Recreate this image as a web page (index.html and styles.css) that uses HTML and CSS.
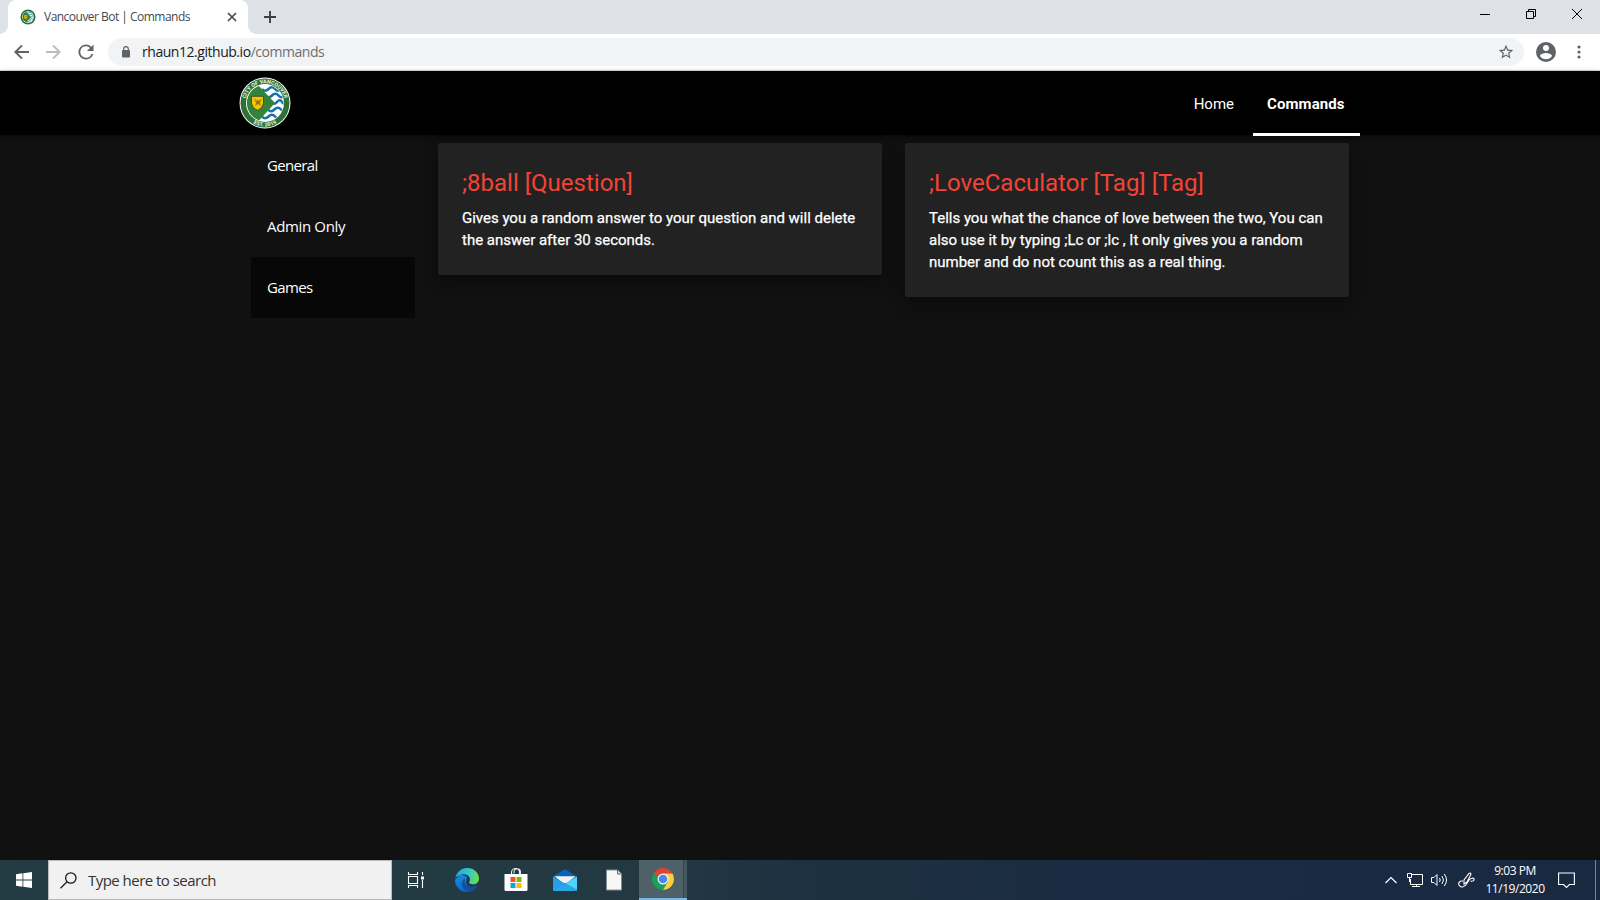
FILE: index.html
```html
<!DOCTYPE html>
<html lang="en">
<head>
<meta charset="utf-8">
<title>Vancouver Bot | Commands</title>
<link rel="stylesheet" href="styles.css">
</head>
<body>
<svg class="defs" width="0" height="0" aria-hidden="true">
  <defs>
    <clipPath id="seal-clip"><circle cx="26" cy="26" r="18.5"/></clipPath>
    <path id="arc-top" d="M6.2 26A19.8 19.8 0 0 1 45.8 26"/>
    <path id="arc-bottom" d="M2.6 26A23.4 23.4 0 0 0 49.4 26"/>
    <symbol id="seal" viewBox="0 0 52 52">
      <circle cx="26" cy="26" r="25.5" fill="#fff"/>
      <circle cx="26" cy="26" r="24.5" fill="#2c7236"/>
      <circle cx="26" cy="26" r="19" fill="#fff"/>
      <g clip-path="url(#seal-clip)">
        <g fill="none" stroke="#1273a8" stroke-width="2.5">
          <path d="M23 12q3 3.500 6.500 0t6.500 0t6.500 0"/>
          <path d="M26 18.500q3.500 3.500 7 0t6.500 0t6.500 0"/>
          <path d="M32 25q3 3.500 6 0t5 0t6 0"/>
          <path d="M29 32.500q3 3.500 6.500 0t6.500 0t6.500 0"/>
          <path d="M23 39.500q3 3.500 6.500 0t6.500 0t6.500 0"/>
        </g>
        <path d="M7.900 26a18 18 0 0 1 12-17L36 26 20 43.500A18 18 0 0 1 7.900 26Z" fill="#35833b"/>
      </g>
      <path d="M12.500 19.300h12v7q-1 5.500-6 7-5-1.500-6-7Z" fill="#f5c800" stroke="#373719" stroke-width=".8"/>
      <path d="m15 21 3 3 1-2 1 2 3-3-2 5 1 3-3-2-3 2 1-3Z" fill="#9b7815"/>
    </symbol>
  </defs>
</svg>

<div class="tabstrip">
  <div class="tab">
    <svg class="favicon" width="16" height="16"><use href="#seal"/></svg>
    <span class="tab-title">Vancouver Bot | Commands</span>
    <svg class="tab-close" width="10" height="10" viewBox="0 0 10 10"><path d="m1 1 8 8M9 1 1 9" stroke="#45484c" stroke-width="1.700"/></svg>
  </div>
  <svg class="new-tab" width="12" height="12" viewBox="0 0 12 12"><path d="M6 0v12M0 6h12" stroke="#3c4043" stroke-width="1.900"/></svg>
  <div class="window-controls">
    <svg width="10" height="10" viewBox="0 0 10 10"><path d="M0 5.500h10" stroke="#000"/></svg>
    <svg width="10" height="10" viewBox="0 0 10 10" fill="none" stroke="#000"><path d="M.5 2.500h7v7h-7ZM2.500 2.500v-2h7v7h-2"/></svg>
    <svg width="10" height="10" viewBox="0 0 10 10"><path d="m0 0 10 10M10 0 0 10" stroke="#000"/></svg>
  </div>
</div>

<div class="toolbar">
  <div class="nav-buttons">
    <svg width="16" height="16" viewBox="4 4 16 16" fill="#5f6368"><path d="M19 11H7.830l4.880-4.880L11.300 4.700 4 12l7.300 7.300 1.410-1.410L7.830 13H19Z"/></svg>
    <svg width="16" height="16" viewBox="4 4 16 16" fill="#babcbe"><path d="m11.700 4.700-1.410 1.410L15.170 11H4v2h11.170l-4.880 4.890 1.410 1.410L19 12Z"/></svg>
    <svg width="16" height="16" viewBox="3.500 3.500 17 17" fill="#5f6368"><path d="M17.650 6.350A8 8 0 1 0 19.730 14h-2.080A6 6 0 1 1 12 6c1.660 0 3.140.690 4.220 1.780L13 11h7V4Z"/></svg>
  </div>
  <div class="omnibox">
    <svg class="lock" width="10" height="12" viewBox="0 0 10 12"><rect x="1" y="4" width="8" height="7.500" rx="1" fill="#5f6368"/><path d="M2.700 5V3a2.300 2.300 0 0 1 4.600 0v2" fill="none" stroke="#5f6368" stroke-width="1.200"/></svg>
    <span class="url">rhaun12.github.io<span class="path">/commands</span></span>
    <svg class="star" width="16" height="16" viewBox="1 1 22 22" fill="#5f6368"><path d="m22 9.240-7.190-.62L12 2 9.190 8.630 2 9.240l5.460 4.730L5.820 21 12 17.270 18.180 21l-1.630-7.030ZM12 15.400l-3.760 2.270 1-4.280-3.320-2.880 4.380-.38L12 6.100l1.710 4.040 4.380.38-3.320 2.880 1 4.280Z"/></svg>
  </div>
  <svg class="profile" width="20" height="20" viewBox="2 2 20 20" fill="#5f6368"><path d="M12 2a10 10 0 1 0 0 20 10 10 0 0 0 0-20Zm0 3a3 3 0 1 1 0 6 3 3 0 0 1 0-6Zm0 14.200a7.200 7.200 0 0 1-6-3.220c.03-1.990 4-3.080 6-3.080s5.970 1.090 6 3.080a7.200 7.200 0 0 1-6 3.220Z"/></svg>
  <svg class="kebab" width="4" height="14" viewBox="0 0 4 14" fill="#5f6368"><circle cx="2" cy="2" r="1.600"/><circle cx="2" cy="7" r="1.600"/><circle cx="2" cy="12" r="1.600"/></svg>
</div>

<div class="page">
  <header class="navbar">
    <div class="container">
      <svg class="logo" width="52" height="52" viewBox="0 0 52 52">
        <use href="#seal"/>
        <g fill="#e8f3e8" font-family="Roboto, sans-serif" font-weight="700" font-size="5.400" text-anchor="middle">
          <text><textPath href="#arc-top" startOffset="50%">CITY OF VANCOUVER</textPath></text>
          <text><textPath href="#arc-bottom" startOffset="50%">EST. 2019</textPath></text>
        </g>
      </svg>
      <nav class="links">
        <a class="link">Home</a>
        <a class="link active">Commands</a>
      </nav>
    </div>
  </header>
  <main class="content">
    <ul class="sidebar">
      <li>General</li>
      <li class="wide">Admin Only</li>
      <li class="selected">Games</li>
    </ul>
    <section class="card">
      <h2>;8ball [Question]</h2>
      <p>Gives you a random answer to your question and will delete<br>the answer after 30 seconds.</p>
    </section>
    <section class="card">
      <h2>;LoveCaculator [Tag] [Tag]</h2>
      <p>Tells you what the chance of love between the two, You can<br>also use it by typing ;Lc or ;lc , It only gives you a random<br>number and do not count this as a real thing.</p>
    </section>
  </main>
</div>

<footer class="taskbar">
  <div class="start">
    <svg width="16" height="16" viewBox="0 0 16 16" fill="#fff"><path d="M0 2.200 6.500 1.300v6.300H0ZM7.300 1.200 16 0v7.600H7.300ZM0 8.400h6.500v6.300L0 13.800ZM7.300 8.400H16V16l-8.700-1.200Z"/></svg>
  </div>
  <div class="search">
    <svg width="17" height="17" viewBox="0 0 17 17" fill="none" stroke="#1c1c1c" stroke-width="1.300"><circle cx="10.800" cy="6" r="5.200"/><path d="M7 9.700.5 16.300"/></svg>
    <span>Type here to search</span>
  </div>
  <div class="apps">
    <div class="app task-view">
      <svg width="18" height="16" viewBox="0 0 18 16" fill="none" stroke="#fff" stroke-width="1.100"><path d="M1.500 0v2.500h9V0M1.500 16v-2.500h9V16M1.500 4.500h9v7h-9ZM15.500 0v3M15.500 8v8"/><path d="M14 4.500h3v3h-3Z" fill="#fff" stroke="none"/></svg>
    </div>
    <div class="app">
      <svg width="24" height="24" viewBox="0 0 24 24">
        <defs>
          <linearGradient id="edge-a" x1="0" y1=".3" x2="1" y2=".4"><stop offset="0" stop-color="#2aa5dc"/><stop offset=".55" stop-color="#31c8cf"/><stop offset="1" stop-color="#6be04e"/></linearGradient>
          <linearGradient id="edge-b" x1="0" y1="0" x2=".3" y2="1"><stop offset="0" stop-color="#1b8fdc"/><stop offset="1" stop-color="#0a6bd0"/></linearGradient>
        </defs>
        <path d="M12 24C5.300 24 0 18.600 0 12l5-6 7 2.500-1 6 4 9Z" fill="url(#edge-b)"/>
        <path d="M.2 10.500C1.300 4.300 6.200.1 12 .1c7 0 12 4.900 12 10.400 0 3.500-2.600 5.800-6 5.800-2.500 0-4-1-4-2 0-.7 1-1.100 1-2.900C15 8.500 12.500 6.300 8.700 6.300 4.500 6.300 1.300 8 .2 10.500Z" fill="url(#edge-a)"/>
        <path d="M10.400 10.200C8 11.200 7 13.500 7 15.800c0 4 3 8.200 6.500 8.100 4-.2 7.500-3 9-5.700.3-.6-.2-.9-.7-.6-5.800 2.700-12.200.2-12.200-4.400 0-1.200.3-2.200.8-3Z" fill="#134fa0"/>
      </svg>
    </div>
    <div class="app">
      <svg width="24" height="24" viewBox="0 0 24 24"><path d="M7.500 7V4.500a4 4 0 0 1 8 0V7M10 5.500V4a3.200 3.200 0 0 1 6.400 0v2" fill="none" stroke="#e9eef0" stroke-width="1.100"/><path d="M.5 6h23v15.500q0 1.500-1.500 1.500H2Q.5 23 .5 21.500Z" fill="#fff"/><path d="M6.500 9h5v5h-5Z" fill="#f25022"/><path d="M12.500 9h5v5h-5Z" fill="#7fba00"/><path d="M6.500 15h5v5h-5Z" fill="#00a4ef"/><path d="M12.500 15h5v5h-5Z" fill="#ffb900"/></svg>
    </div>
    <div class="app">
      <svg width="24" height="24" viewBox="0 0 24 24"><path d="M0 8.500 12 1l12 7.500V13H0Z" fill="#0b63b8"/><path d="M1.500 8.200h21L14 15h-4Z" fill="#f2f2f2"/><path d="M0 8.500 24 23H1q-1 0-1-1Z" fill="#2a9de8"/><path d="m24 8.500-12 7L24 22Z" fill="#50d3fb"/><path d="M12 15.500 24 22q0 1-1 1H1Z" fill="#28a8ea"/></svg>
    </div>
    <div class="app">
      <svg width="18" height="22" viewBox="0 0 18 22"><path d="M1.500 1h11l4 4v16h-15Z" fill="#f7f7f8" stroke="#898d90" stroke-width="1"/><path d="M12.500 1v4h4" fill="#d5d7d8" stroke="#65696b"/></svg>
    </div>
    <div class="app running">
      <svg width="22" height="22" viewBox="0 0 22 22"><path d="M11 11 1.500 5.500A11 11 0 0 1 20.500 5.500H11Z" fill="#db4437"/><path d="M11 11 1.500 5.500A11 11 0 0 0 11 22l4.800-8.300Z" fill="#1a9e58"/><path d="M11 5.500h9.500A11 11 0 0 1 11 22l4.800-8.300Z" fill="#ffcd40"/><circle cx="11" cy="11" r="5.500" fill="#f1f1f1"/><circle cx="11" cy="11" r="4.300" fill="#4688f1"/></svg>
    </div>
  </div>
  <div class="tray">
    <svg class="chevron" width="12" height="8" viewBox="0 0 12 8" fill="none" stroke="#fff" stroke-width="1.200"><path d="m.5 7 5.500-5.500L11.500 7"/></svg>
    <svg class="network" width="17" height="14" viewBox="0 0 17 14" fill="none" stroke="#fff"><path d="M5 1.500h10.500v10H3.500V6M9.500 11.500v2M5 13.500h8M.5.500h4v4h-4ZM2.500 4.500V9"/></svg>
    <svg class="volume" width="17" height="14" viewBox="0 0 17 14" fill="none" stroke="#fff"><path d="M.5 4.500H3l3-3v11l-3-3H.5ZM8.500 5q1.500 2 0 4M11 3q3 4 0 8M13.300 1q4.500 6 0 12"/></svg>
    <svg class="pen" width="17" height="17" viewBox="0 0 17 17" fill="none" stroke="#fff" stroke-width="1.100"><path d="M6 12V8l5-6.500q1.500-1.200 2 .8L9 10ZM5 9C1.500 8.500 0 11 1 13c1.500 3 5.500 2.500 7.500-1L11 8c1.500-2 4.500-2.500 5-1s-1.500 2.800-3.500 2"/></svg>
    <div class="clock"><span>9:03 PM</span><span>11/19/2020</span></div>
    <svg class="notice" width="17" height="17" viewBox="0 0 17 17" fill="none" stroke="#fff" stroke-width="1.100"><path d="M.6 1h15.800v11.500h-5L8.500 15.500l-3-3H.6Z"/></svg>
    <div class="show-desktop"></div>
  </div>
</footer>
</body>
</html>
```
FILE: styles.css
```css
* { box-sizing: border-box; }

body {
  margin: 0;
  height: 900px;
  display: flex;
  flex-direction: column;
  overflow: hidden;
  background: #111;
  font-family: "Open Sans", "Noto Sans", sans-serif;
}

svg { display: block; flex: none; }
.defs { position: absolute; }

/* Browser chrome */
.tabstrip {
  height: 34px;
  flex: none;
  display: flex;
  align-items: center;
  padding-left: 8px;
  background: #dee1e6;
}
.tab {
  width: 240px;
  height: 34px;
  display: flex;
  align-items: center;
  padding: 0 12px;
  background: #fff;
  border-radius: 8px 8px 0 0;
  position: relative;
}
.tab::before, .tab::after {
  content: "";
  position: absolute;
  bottom: 0;
  width: 8px;
  height: 8px;
}
.tab::before { left: -8px; background: radial-gradient(circle at 0 0, #dee1e6 7.5px, #fff 8px); }
.tab::after { right: -8px; background: radial-gradient(circle at 100% 0, #dee1e6 7.5px, #fff 8px); }
.tab-title {
  margin-left: 8px;
  color: #45494d;
  font-size: 12px;
  line-height: 16px;
  letter-spacing: -0.52px;
  white-space: nowrap;
}
.tab-close { margin-left: auto; margin-right: -1px; }
.new-tab { margin-left: 16px; }
.window-controls {
  margin-left: auto;
  display: flex;
  gap: 36px;
  padding: 0 18px 6px 0;
}
.toolbar {
  height: 37px;
  flex: none;
  display: flex;
  align-items: center;
  background: #fff;
  border-bottom: 1px solid #d9e0dd;
}
.nav-buttons {
  width: 108px;
  display: flex;
  gap: 16px;
  padding-left: 14px;
}
.omnibox {
  width: 1416px;
  height: 28px;
  display: flex;
  align-items: center;
  padding: 0 10px 0 13px;
  background: #f1f3f4;
  border-radius: 14px;
}
.url {
  margin-left: 11px;
  color: #202124;
  font-size: 14px;
  line-height: 20px;
  letter-spacing: -0.46px;
}
.path { color: #6b6f73; }
.star { margin-left: auto; }
.profile { margin-left: 12px; }
.kebab { margin-left: 21px; }

/* Site */
.page {
  height: 789px;
  flex: none;
  color: #fff;
  font-family: Roboto, sans-serif;
}
.navbar {
  height: 64px;
  background: #000;
  box-shadow: 0 2px 5px rgba(0, 0, 0, .5);
}
.container {
  width: 1120px;
  height: 64px;
  margin: 0 auto;
  display: flex;
  align-items: center;
  justify-content: space-between;
}
.logo { margin-left: -1px; }
.links { display: flex; height: 64px; }
.link {
  height: 65px;
  padding: 0 15px;
  font-size: 15px;
  line-height: 66px;
  position: relative;
  z-index: 1;
}
.active {
  width: 107px;
  margin-left: 4px;
  padding-left: 14px;
  border-bottom: 3px solid #fff;
  font-weight: 700;
  letter-spacing: 0.1px;
}
.content {
  width: 1098px;
  margin: 0 auto;
  display: grid;
  grid-template-columns: 164px 444px 444px;
  column-gap: 23px;
  align-items: start;
}
.sidebar {
  margin: 0;
  padding: 0;
  list-style: none;
  font-family: "Open Sans", "Noto Sans", sans-serif;
  font-size: 15px;
  letter-spacing: -0.65px;
}
.sidebar li {
  height: 61px;
  padding-left: 16px;
  line-height: 61px;
}
.sidebar .wide { letter-spacing: -0.35px; }
.sidebar .selected { background: #070707; }
.card {
  margin-top: 8px;
  padding: 24px;
  background: #222;
  border-radius: 2px;
  box-shadow: 0 8px 17px rgba(0, 0, 0, .25), 0 4px 12px rgba(0, 0, 0, .18);
}
.card h2 {
  margin: 0 0 8px;
  color: #f44336;
  font-size: 24px;
  font-weight: 400;
  line-height: 32px;
}
.card p {
  margin: 0;
  font-size: 15px;
  font-weight: 400;
  line-height: 22px;
  letter-spacing: -0.01px;
  -webkit-text-stroke: 0.25px #fff;
  white-space: nowrap;
}

/* Taskbar */
.taskbar {
  height: 40px;
  flex: none;
  display: flex;
  color: #fff;
  background: linear-gradient(90deg, #233c44 0, #223942 650px, #1d3140 800px, #1b2b42 1100px, #1a2942 100%);
}
.start { width: 48px; padding: 12px 16px; }
.search {
  width: 344px;
  display: flex;
  align-items: center;
  gap: 11px;
  padding-left: 11px;
  background: #f1f1f1;
  border: 1px solid #bcb9ba;
  color: #333;
  font-size: 15px;
  letter-spacing: -0.53px;
}
.apps { display: flex; }
.app {
  width: 49px;
  height: 40px;
  display: flex;
  align-items: center;
  justify-content: center;
}
.task-view { width: 50px; padding-right: 2px; }
.running {
  width: 48px;
  margin-left: 1px;
  background: linear-gradient(90deg, #4e6068 44px, #33464f 44px, #33464f 45px, #43555e 45px);
  border-bottom: 2px solid #76b9ed;
}
.tray {
  margin-left: auto;
  display: flex;
  align-items: center;
}
.network { margin-left: 10px; }
.volume { margin-left: 7px; }
.pen { margin-left: 10px; }
.clock {
  width: 80px;
  display: flex;
  flex-direction: column;
  align-items: center;
  font-size: 12px;
  line-height: 18px;
  letter-spacing: -0.45px;
}
.notice { margin-left: 3px; }
.show-desktop {
  width: 5px;
  height: 40px;
  margin-left: 20px;
  border-left: 1px solid #7c8594;
}
```
